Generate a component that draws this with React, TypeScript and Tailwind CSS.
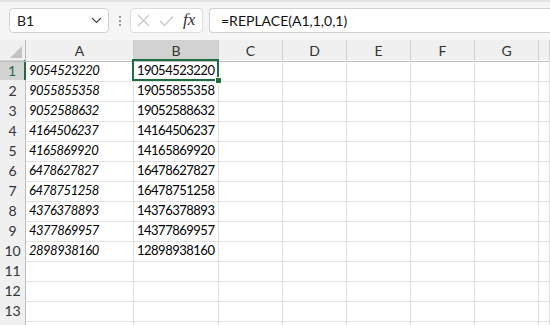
import React from 'react';

const rows: [string, string][] = [
  ['9054523220', '19054523220'],
  ['9055855358', '19055855358'],
  ['9052588632', '19052588632'],
  ['4164506237', '14164506237'],
  ['4165869920', '14165869920'],
  ['6478627827', '16478627827'],
  ['6478751258', '16478751258'],
  ['4376378893', '14376378893'],
  ['4377869957', '14377869957'],
  ['2898938160', '12898938160'],
  ['', ''],
  ['', ''],
  ['', ''],
  ['', ''],
];

const emptyCols = ['C', 'D', 'E', 'F', 'G', 'H'];

const gridCols = 'grid grid-cols-[26px_108px_85px_64px_64px_64px_64px_64px_1fr]';

export default function App() {
  return (
    <div className="w-[550px] h-[325px] overflow-hidden bg-white font-['Lato',sans-serif] text-black">
      {/* 수식 입력줄 */}
      <div className="h-[40px] bg-[#f5f5f5] border-t-2 border-[#e3e3e3] flex items-start pt-[6px]">
        <div className="ml-[9px] w-[100px] h-[25px] bg-white border border-[#d1d1d1] rounded-[4px] flex items-center pl-[7px] pr-[6px]">
          <span className="text-[14px] text-[#222]">B1</span>
          <svg className="ml-auto" width="11" height="7" viewBox="0 0 11 7">
            <path d="M1 1 L5.5 5.5 L10 1" fill="none" stroke="#444" strokeWidth="1.2" />
          </svg>
        </div>
        <div className="w-[21px] h-[25px] flex flex-col items-center justify-center gap-[2px]">
          <span className="w-[2px] h-[2px] bg-[#999]" />
          <span className="w-[2px] h-[2px] bg-[#999]" />
          <span className="w-[2px] h-[2px] bg-[#999]" />
        </div>
        <div className="w-[73px] h-[25px] bg-white border border-[#dcdcdc] rounded-[4px] flex items-center pl-[6px] gap-[9px]">
          <svg width="13" height="13" viewBox="0 0 13 13">
            <path d="M1 1 L12 12 M12 1 L1 12" stroke="#c4c4c4" strokeWidth="1.1" />
          </svg>
          <svg width="15" height="12" viewBox="0 0 15 12">
            <path d="M1 6 L5.5 10.5 L14 1.5" fill="none" stroke="#c4c4c4" strokeWidth="1.1" />
          </svg>
          <span className="font-['Liberation_Serif',serif] italic text-[17px] leading-none text-[#333] -mt-[2px]">fx</span>
        </div>
        <div className="ml-[6px] flex-1 h-[25px] bg-white border border-[#d1d1d1] rounded-l-[4px] border-r-0 flex items-center pl-[11px]">
          <span className="text-[14px] text-[#111]">=REPLACE(A1,1,0,1)</span>
        </div>
      </div>

      {/* 시트 */}
      <div className="relative">
        <div className={`${gridCols} h-[20px] bg-[#f0f0f0]`}>
          <div className="relative border-r border-b border-[#bdbdbd]">
            <svg className="absolute right-[3px] bottom-[3px]" width="12" height="12" viewBox="0 0 12 12">
              <path d="M12 0 L12 12 L0 12 Z" fill="#c3c3c3" />
            </svg>
          </div>
          {['A', 'B', 'C', 'D', 'E', 'F', 'G', ''].map((c) => (
            <div
              key={c || 'H'}
              className={`flex items-center justify-center text-[14px] text-[#333] border-r border-[#d0d0d0] border-b border-b-[#bdbdbd] ${
                c === 'B' ? 'bg-[#d2d2d2]' : ''
              }`}
            >
              {c}
            </div>
          ))}
        </div>

        {rows.map(([a, b], i) => (
          <div key={i} className={`${gridCols} h-[20px]`}>
            <div
              className={`flex items-center justify-center text-[14px] border-b border-[#d0d0d0] ${
                i === 0
                  ? 'bg-[#d2d2d2] text-[#1e6e42] border-r-2 border-r-[#1e6e42]'
                  : 'bg-[#f0f0f0] text-[#333] border-r border-r-[#bdbdbd]'
              }`}
            >
              {i < 13 ? i + 1 : ''}
            </div>
            <div className="flex items-center pl-[3px] text-[13px] tracking-[-0.5px] italic border-r border-b border-[#e1e1e1]">
              {a}
            </div>
            <div className="flex items-center pl-[3px] text-[13px] tracking-[-0.5px] border-r border-b border-[#e1e1e1]">
              {b}
            </div>
            {emptyCols.map((c) => (
              <div key={c} className="border-r border-b border-[#e1e1e1]" />
            ))}
          </div>
        ))}

        {/* 선택 셀 */}
        <div className="absolute left-[132px] top-[19px] w-[87px] h-[22px] border-2 border-[#1e6e42] pointer-events-none" />
        <div className="absolute left-[215px] top-[37px] w-[7px] h-[7px] bg-[#1e6e42] border border-white" />
      </div>
    </div>
  );
}
